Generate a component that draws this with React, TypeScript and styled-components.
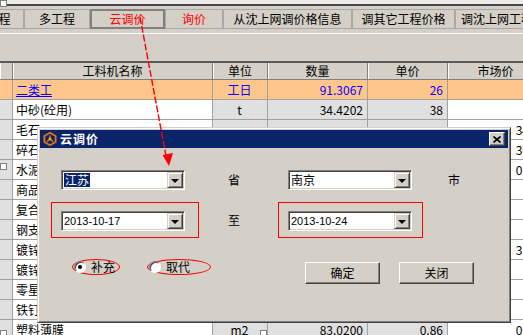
import React from 'react';
import styled, { createGlobalStyle } from 'styled-components';

const GlobalStyle = createGlobalStyle`
  html, body {
    margin: 0;
    padding: 0;
  }
  body {
    width: 523px;
    height: 335px;
    overflow: hidden;
    background: #d4d0c8;
    font-family: "Noto Sans CJK SC", "Liberation Sans", sans-serif;
    font-size: 12px;
    color: #000;
  }
`;

const Screen = styled.div`
  position: relative;
  width: 523px;
  height: 335px;
  overflow: hidden;
  background: #d4d0c8;
`;

const TopStrip = styled.div`
  height: 4px;
  background: #ececec;
  border-bottom: 2px solid #4a4a4a;
`;

const TabBar = styled.div`
  height: 28px;
  padding-top: 3px;
  box-sizing: border-box;
  border-bottom: 1px solid #fff;
`;

const Tabs = styled.div`
  display: flex;
  height: 20px;
  margin-left: -51px;
`;

const Tab = styled.div<{ $w: number; $active?: boolean; $red?: boolean }>`
  flex: none;
  width: ${({ $w }) => $w}px;
  height: 20px;
  box-sizing: border-box;
  display: flex;
  align-items: center;
  justify-content: center;
  white-space: nowrap;
  line-height: 1;
  color: ${({ $red }) => ($red ? '#ff0000' : '#000')};
  border: ${({ $active }) => ($active ? '2px solid #808080' : '1px solid #a8a8a8')};
`;

const Gap = styled.div`
  height: 27px;
`;

const Grid = styled.div`
  display: grid;
  grid-template-columns: 13px 200px 55px 100px 80px 96px;
  grid-template-rows: 17px;
  grid-auto-rows: 20px;
  border-top: 2px solid #5a5a5a;
  width: max-content;
`;

const HeadCell = styled.div`
  box-sizing: border-box;
  display: flex;
  align-items: center;
  justify-content: center;
  white-space: nowrap;
  background: #d4d0c8;
  border-right: 1px solid #808080;
  border-bottom: 1px solid #808080;
  box-shadow: inset 1px 0 #fff;
  line-height: 1;
`;

const Cell = styled.div<{ $bg: string; $align?: 'left' | 'center' | 'right'; $color?: string; $link?: boolean }>`
  box-sizing: border-box;
  display: flex;
  align-items: center;
  justify-content: ${({ $align }) =>
    $align === 'right' ? 'flex-end' : $align === 'center' ? 'center' : 'flex-start'};
  padding: 0 4px 0 3px;
  white-space: nowrap;
  overflow: hidden;
  line-height: 1;
  background: ${({ $bg }) => $bg};
  color: ${({ $color }) => $color || '#000'};
  text-decoration: ${({ $link }) => ($link ? 'underline' : 'none')};
  border-right: 1px solid #a0a0a0;
  border-bottom: 1px solid #a0a0a0;
`;

const Marker = styled.div<{ $x: number; $y: number }>`
  position: absolute;
  left: ${({ $x }) => $x}px;
  top: ${({ $y }) => $y}px;
  width: 7px;
  height: 7px;
  box-sizing: border-box;
  background: #fff;
  border: 1px solid #808080;
`;

/* dialog */

const Dialog = styled.div`
  position: absolute;
  left: 37px;
  top: 127px;
  width: 474px;
  height: 196px;
  box-sizing: border-box;
  background: #d4d0c8;
  border: 1px solid;
  border-color: #d4d0c8 #404040 #404040 #d4d0c8;
  box-shadow: inset 1px 1px #fff, inset -1px -1px #808080;
  padding: 1px 2px 2px 2px;
  display: flex;
  flex-direction: column;
`;

const TitleBar = styled.div`
  height: 18px;
  margin-top: 1px;
  flex: none;
  background: #0a246a;
  display: flex;
  align-items: center;
  padding: 0 3px 0 3px;
  gap: 3px;
`;

const TitleText = styled.span`
  color: #fff;
  font-weight: bold;
  font-size: 12px;
  line-height: 1;
  letter-spacing: 1px;
`;

const CloseButton = styled.div`
  margin-left: auto;
  width: 16px;
  height: 14px;
  box-sizing: border-box;
  background: #d4d0c8;
  border: 1px solid;
  border-color: #fff #404040 #404040 #fff;
  box-shadow: inset -1px -1px #808080;
  display: flex;
  align-items: center;
  justify-content: center;
`;

const Body = styled.div`
  padding: 22px 0 0 11px;
`;

const Form = styled.div`
  display: grid;
  grid-template-columns: 148px 79px 145px auto;
  grid-template-rows: 20px 36px;
  row-gap: 12px;
  align-items: center;
`;

const ComboSlot = styled.div`
  padding-left: 10px;
`;

const RedFrame = styled.div`
  box-sizing: border-box;
  height: 36px;
  border: 1px solid #ff0000;
  padding: 8px 0 0 9px;
`;

const FieldLabel = styled.div<{ $indent: number }>`
  padding-left: ${({ $indent }) => $indent}px;
  line-height: 1;
`;

const Combo = styled.div`
  width: 124px;
  height: 20px;
  box-sizing: border-box;
  background: #fff;
  border: 1px solid;
  border-color: #808080 #fff #fff #808080;
  box-shadow: inset 1px 1px #404040, inset -1px -1px #d4d0c8;
  padding: 1px;
  display: flex;
`;

const ComboText = styled.div<{ $latin?: boolean }>`
  flex: 1;
  display: flex;
  align-items: center;
  white-space: nowrap;
  line-height: 1;
  font-family: ${({ $latin }) =>
    $latin ? '"Liberation Sans", Arial, sans-serif' : '"Noto Sans CJK SC", sans-serif'};
  font-size: ${({ $latin }) => ($latin ? '11px' : '12px')};
  padding-left: 1px;
`;

const Selected = styled.span`
  background: #0a246a;
  color: #fff;
  padding: 1px 1px;
`;

const DropButton = styled.div`
  width: 16px;
  height: 16px;
  box-sizing: border-box;
  background: #d4d0c8;
  border: 1px solid;
  border-color: #d4d0c8 #404040 #404040 #d4d0c8;
  box-shadow: inset 1px 1px #fff, inset -1px -1px #808080;
  display: flex;
  align-items: center;
  justify-content: center;

  &::after {
    content: '';
    margin-top: 1px;
    border-left: 4px solid transparent;
    border-right: 4px solid transparent;
    border-top: 4px solid #000;
  }
`;

const Footer = styled.div`
  display: flex;
  align-items: flex-start;
  margin-top: 21px;
  padding-left: 21px;
`;

const Options = styled.div`
  display: flex;
  gap: 27px;
`;

const OptionLabel = styled.label<{ $w: number }>`
  width: ${({ $w }) => $w}px;
  height: 16px;
  box-sizing: border-box;
  border: 1px solid #ff0000;
  border-radius: 50%;
  display: flex;
  align-items: center;
  gap: 5px;
  padding-left: 1px;
  line-height: 1;
  white-space: nowrap;
`;

const RadioDot = styled.span<{ $on?: boolean }>`
  flex: none;
  width: 12px;
  height: 12px;
  box-sizing: border-box;
  border-radius: 50%;
  background: #fff;
  border: 1px solid;
  border-color: #808080 #fff #fff #808080;
  box-shadow: inset 1px 1px #404040;
  display: flex;
  align-items: center;
  justify-content: center;

  &::after {
    content: '';
    width: 4px;
    height: 4px;
    border-radius: 50%;
    background: ${({ $on }) => ($on ? '#000' : 'transparent')};
  }
`;

const Buttons = styled.div`
  display: flex;
  gap: 19px;
  margin-left: 94px;
  margin-top: 3px;
`;

const Button = styled.div`
  width: 75px;
  height: 22px;
  box-sizing: border-box;
  background: #d4d0c8;
  border: 1px solid;
  border-color: #fff #404040 #404040 #fff;
  box-shadow: inset -1px -1px #808080;
  display: flex;
  align-items: center;
  justify-content: center;
  line-height: 1;
`;

const Overlay = styled.svg`
  position: absolute;
  left: 0;
  top: 0;
  pointer-events: none;
`;

interface Row {
  name: string;
  unit: string;
  qty: string;
  price: string;
  market: string;
  hi?: boolean;
}

// rows 3..12 sit behind the dialog: only the name's first glyph and the
// market price column peek out on either side
const rows: Row[] = [
  { name: '二类工', unit: '工日', qty: '91.3067', price: '26', market: '', hi: true },
  { name: '中砂(砼用)', unit: 't', qty: '34.4202', price: '38', market: '' },
  { name: '毛石', unit: '', qty: '', price: '', market: '34.2' },
  { name: '碎石', unit: '', qty: '', price: '', market: '36.5' },
  { name: '水泥', unit: '', qty: '', price: '', market: '0.42' },
  { name: '商品混凝土', unit: '', qty: '', price: '', market: '' },
  { name: '复合模板', unit: '', qty: '', price: '', market: '' },
  { name: '钢支撑', unit: '', qty: '', price: '', market: '' },
  { name: '镀锌铁丝', unit: '', qty: '', price: '', market: '3.96' },
  { name: '镀锌钢管', unit: '', qty: '', price: '', market: '' },
  { name: '零星材料费', unit: '', qty: '', price: '', market: '' },
  { name: '铁钉', unit: '', qty: '', price: '', market: '' },
  { name: '塑料薄膜', unit: 'm2', qty: '83.0200', price: '0.86', market: '0.86' },
];

const tabs = [
  { label: '单位工程', w: 75 },
  { label: '多工程', w: 66 },
  { label: '云调价', w: 75, active: true, red: true },
  { label: '询价', w: 58, red: true },
  { label: '从沈上网调价格信息', w: 129 },
  { label: '调其它工程价格', w: 103 },
  { label: '调沈上网工程价格', w: 108 },
];

const headers = ['', '工料机名称', '单位', '数量', '单价', '市场价'];

const Logo = () => (
  <svg width="14" height="14" viewBox="0 0 14 14">
    <polygon points="7,0.8 12.6,4 12.6,10 7,13.2 1.4,10 1.4,4" fill="none" stroke="#e8740c" strokeWidth="1.8" />
    <path d="M7 3.5 L7 7 M7 7 L4 9.6 M7 7 L10 9.6" stroke="#e8740c" strokeWidth="1.6" fill="none" />
    <circle cx="7" cy="7" r="1.4" fill="#f5a040" />
  </svg>
);

const CloseGlyph = () => (
  <svg width="8" height="7" viewBox="0 0 8 7">
    <path d="M0.5 0.5 L7.5 6.5 M7.5 0.5 L0.5 6.5" stroke="#000" strokeWidth="1.6" />
  </svg>
);

export default function App() {
  return (
    <Screen>
      <GlobalStyle />
      <TopStrip />
      <TabBar>
        <Tabs>
          {tabs.map((t) => (
            <Tab key={t.label} $w={t.w} $active={t.active} $red={t.red}>
              {t.label}
            </Tab>
          ))}
        </Tabs>
      </TabBar>
      <Gap />
      <Grid>
        {headers.map((h, i) => (
          <HeadCell key={i}>{h}</HeadCell>
        ))}
        {rows.map((r) => {
          const orange = '#ffc68c';
          const side = r.hi ? orange : '#e0e0e0';
          const plain = r.hi ? orange : '#fff';
          const ink = r.hi ? '#0000ff' : '#000';
          return (
            <React.Fragment key={r.name}>
              <Cell $bg={side} />
              <Cell $bg={plain} $color={ink} $link={r.hi}>{r.name}</Cell>
              <Cell $bg={side} $align="center" $color={ink}>{r.unit}</Cell>
              <Cell $bg={side} $align="right" $color={ink}>{r.qty}</Cell>
              <Cell $bg={side} $align="right" $color={ink}>{r.price}</Cell>
              <Cell $bg={plain} $align="right" $color={ink}>{r.market}</Cell>
            </React.Fragment>
          );
        })}
      </Grid>

      <Marker $x={0} $y={0} />
      <Marker $x={0} $y={163} />
      <Marker $x={0} $y={330} />
      <Marker $x={260} $y={330} />

      <Dialog>
        <TitleBar>
          <Logo />
          <TitleText>云调价</TitleText>
          <CloseButton>
            <CloseGlyph />
          </CloseButton>
        </TitleBar>
        <Body>
          <Form>
            <ComboSlot>
              <Combo>
                <ComboText><Selected>江苏</Selected></ComboText>
                <DropButton />
              </Combo>
            </ComboSlot>
            <FieldLabel $indent={29}>省</FieldLabel>
            <ComboSlot>
              <Combo>
                <ComboText>南京</ComboText>
                <DropButton />
              </Combo>
            </ComboSlot>
            <FieldLabel $indent={25}>市</FieldLabel>

            <RedFrame>
              <Combo>
                <ComboText $latin>2013-10-17</ComboText>
                <DropButton />
              </Combo>
            </RedFrame>
            <FieldLabel $indent={29}>至</FieldLabel>
            <RedFrame>
              <Combo>
                <ComboText $latin>2013-10-24</ComboText>
                <DropButton />
              </Combo>
            </RedFrame>
            <div />
          </Form>
          <Footer>
            <Options>
              <OptionLabel $w={48}>
                <RadioDot $on />
                补充
              </OptionLabel>
              <OptionLabel $w={64}>
                <RadioDot />
                取代
              </OptionLabel>
            </Options>
            <Buttons>
              <Button>确定</Button>
              <Button>关闭</Button>
            </Buttons>
          </Footer>
        </Body>
      </Dialog>

      <Overlay width="523" height="335" viewBox="0 0 523 335">
        <line x1="140" y1="17" x2="166" y2="156" stroke="#ff0000" strokeWidth="1.4" strokeDasharray="7 2" />
        <polygon points="162.5,155 173,153 169,166" fill="#ff0000" />
      </Overlay>
    </Screen>
  );
}
